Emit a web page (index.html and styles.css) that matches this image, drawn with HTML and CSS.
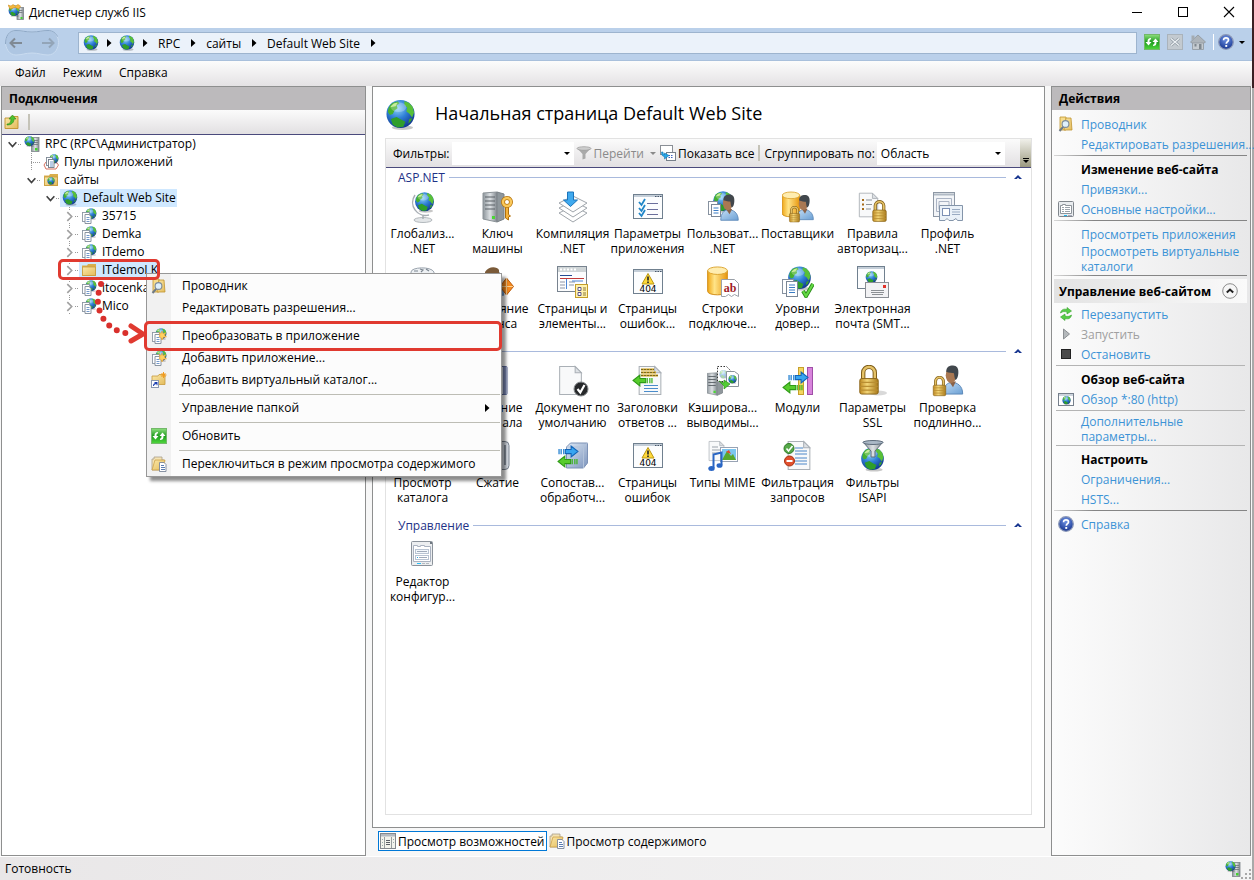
FILE: index.html
```html
<!DOCTYPE html>
<html lang="ru">
<head>
  <meta charset="UTF-8">
  <meta name="viewport" content="width=device-width, initial-scale=1.0">
  <title>Диспетчер служб IIS</title>
  <link rel="stylesheet" href="styles.css">
</head>
<body>
  <!-- Icon sprite -->
  <svg class="sprite" aria-hidden="true">
    <defs>
      <radialGradient id="gSea" cx="0.4" cy="0.3" r="0.7">
        <stop offset="0" stop-color="#8fd4f7"/><stop offset="0.5" stop-color="#2f7fd6"/><stop offset="1" stop-color="#123a92"/>
      </radialGradient>
      <linearGradient id="gFolder" x1="0" y1="0" x2="1" y2="1">
        <stop offset="0" stop-color="#fbe8a8"/><stop offset="1" stop-color="#e3bb5c"/>
      </linearGradient>
      <linearGradient id="gGold" x1="0" y1="0" x2="1" y2="0">
        <stop offset="0" stop-color="#c08a22"/><stop offset="0.4" stop-color="#f3d678"/><stop offset="1" stop-color="#a87818"/>
      </linearGradient>
      <linearGradient id="gDb" x1="0" y1="0" x2="1" y2="0">
        <stop offset="0" stop-color="#f0a818"/><stop offset="0.35" stop-color="#ffe488"/><stop offset="1" stop-color="#e8960c"/>
      </linearGradient>
      <linearGradient id="gSteel" x1="0" y1="0" x2="1" y2="0">
        <stop offset="0" stop-color="#8c949a"/><stop offset="0.5" stop-color="#dde1e4"/><stop offset="1" stop-color="#7f868c"/>
      </linearGradient>
      <linearGradient id="gShirt" x1="0" y1="0" x2="1" y2="1">
        <stop offset="0" stop-color="#c4def5"/><stop offset="1" stop-color="#6a9fd4"/>
      </linearGradient>
      <linearGradient id="gGreen" x1="0" y1="0" x2="0" y2="1">
        <stop offset="0" stop-color="#8fe07f"/><stop offset="0.5" stop-color="#1f9c1f"/><stop offset="1" stop-color="#4fd83c"/>
      </linearGradient>
      <linearGradient id="gBlock" x1="0" y1="0" x2="1" y2="1">
        <stop offset="0" stop-color="#dfe9f5"/><stop offset="1" stop-color="#7d95bd"/>
      </linearGradient>
      <radialGradient id="gHelp" cx="0.5" cy="0.3" r="0.7">
        <stop offset="0" stop-color="#6f94e6"/><stop offset="1" stop-color="#16348f"/>
      </radialGradient>
    </defs>

    <symbol id="globe" viewBox="0 0 32 32">
      <ellipse cx="18" cy="29" rx="11" ry="2.500" fill="#000" opacity="0.22"/>
      <circle cx="16" cy="15" r="14.500" fill="url(#gSea)"/>
      <path d="M3 13C3 8 6 4 9 3l4-1 2 2-3 2 1 3-3 2-2 4-3 1z" fill="#46b02e"/>
      <path d="M20 1.500l5 2 3.500 4 1.500 6-2 5-3-4-3-2 1-4-3-3z" fill="#58c038"/>
      <path d="M6 20l6-2 5 3 4 2-2 5-6 1-5-3z" fill="#2f9e2a"/>
      <path d="M25 20l3-1-1 3-3 3z" fill="#3aa22c"/>
      <path d="M5 8 9 4l4-1-2 4z" fill="#b8e87c"/>
      <ellipse cx="14" cy="8" rx="8" ry="5" fill="#fff" opacity="0.25"/>
    </symbol>

    <symbol id="folder" viewBox="0 0 16 16">
      <path d="M1 3.500h5l1-1.500h8v12H1z" fill="#d9ae4c"/>
      <path d="M1.500 5h13v8.500h-13z" fill="url(#gFolder)" stroke="#c79a3c" stroke-width="0.800"/>
    </symbol>

    <symbol id="folder-up" viewBox="0 0 16 16">
      <path d="M1 4h5l1-1.500h7v12H1z" fill="url(#gFolder)" stroke="#c0922e" stroke-width="0.900"/>
      <path d="M3 10c3 0 4-2 4-5H5l3.500-4L12 5h-2c0 4-3 6-7 6z" fill="#4cc030" stroke="#2b8a1a" stroke-width="0.600"/>
    </symbol>

    <symbol id="folder-globe" viewBox="0 0 16 16">
      <use href="#folder"/>
      <use href="#globe" x="4" y="5" width="8" height="8"/>
    </symbol>

    <symbol id="folder-search" viewBox="0 0 16 16">
      <path d="M2 1h6v13H2z" fill="#f6dc8c" stroke="#c0942e" stroke-width="0.800"/>
      <path d="M8 2h5l1 12H6z" fill="url(#gFolder)" stroke="#c0942e" stroke-width="0.800"/>
      <path d="M5.500 10.500 1.500 15" stroke="#6e7a86" stroke-width="2"/>
      <circle cx="7.500" cy="8" r="3.400" fill="#dff1fc" stroke="#7d8b99" stroke-width="1.100"/>
    </symbol>

    <symbol id="folder-link" viewBox="0 0 16 16">
      <path d="M1 4h6l1-1.500h6v10H1z" fill="url(#gFolder)" stroke="#c79a3c" stroke-width="0.800"/>
      <path d="M12.500 0v6M9.500 3h6M10.500 1l4 4M14.500 1l-4 4" stroke="#f29a1c"/>
      <rect x="0.500" y="8.500" width="7" height="7" fill="#fff" stroke="#8a98b0"/>
      <path d="M2 14c0-2 1-3 2.500-3H3.500V10H6.500v3.200h-1V12C4 12 3 13 3 14z" fill="#1c3fb0"/>
    </symbol>

    <symbol id="folder-docs" viewBox="0 0 16 16">
      <path d="M1 3h2V1h8v3h2v10H1z" fill="#f4e3b4" stroke="#a9a08a" stroke-width="0.800"/>
      <path d="M1 14 4 4h10l-2 10z" fill="url(#gFolder)" stroke="#c79a3c" stroke-width="0.700"/>
      <path d="M8.500 6.500h4.500l2 2v7H8.500z" fill="#fff" stroke="#7a8698" stroke-width="0.900"/>
      <path d="M10 9.500h3M10 11.500h4M10 13.500h4" stroke="#4a6ea8" stroke-width="0.900"/>
    </symbol>

    <symbol id="server-globe" viewBox="0 0 16 16">
      <rect x="7.500" y="1.500" width="7.500" height="14" fill="url(#gSteel)" stroke="#7c8388" stroke-width="0.800"/>
      <path d="M9 4.500h5M9 6.500h5M9 8.500h5" stroke="#6b7278" stroke-width="0.800"/>
      <rect x="11" y="12" width="2.500" height="2.500" fill="#45d031"/>
      <use href="#globe" x="0" y="0" width="11" height="11"/>
    </symbol>

    <symbol id="iis" viewBox="0 0 16 16">
      <rect x="9" y="3.500" width="6.500" height="12" fill="url(#gSteel)" stroke="#7c8388" stroke-width="0.800"/>
      <path d="M10 6.500h4.500M10 8.500h4.500" stroke="#6b7278" stroke-width="0.800"/>
      <rect x="12.500" y="13" width="2" height="2" fill="#45d031"/>
      <use href="#globe" x="0" y="1" width="12" height="12"/>
      <path d="M0 1l3 1 2-1.500L7.500 2 10 0.500 12.500 2 11 5 7 3.500 2 5z" fill="#f5b840" stroke="#c98412" stroke-width="0.500"/>
    </symbol>

    <symbol id="site-app" viewBox="0 0 16 16">
      <use href="#globe" x="4" y="0" width="12" height="12"/>
      <rect x="1.500" y="4.500" width="7" height="9" fill="#fff" stroke="#8d98a4" stroke-width="0.900"/>
      <path d="M4 6.500h4l2 2v7H4z" fill="#fff" stroke="#7e8996" stroke-width="0.900"/>
      <path d="M5.500 9.500h3M5.500 11.500h3M5.500 13.500h3" stroke="#4f7dbd" stroke-width="0.800"/>
    </symbol>

    <symbol id="site-new" viewBox="0 0 16 16">
      <use href="#site-app"/>
      <path d="M11 3l1 2.500 2.800-.8L13.500 7 15.500 9l-3 .2L11 12 9.800 9.200 8 9l1-2L8 4.500l2.200.8z" fill="#ffd060" stroke="#e89a20" stroke-width="0.500"/>
    </symbol>

    <symbol id="pools" viewBox="0 0 16 16">
      <path d="M1 11l2-3h10l2.500 3-2.500 4H3z" fill="#fff" stroke="#d0604c" stroke-width="0.900"/>
      <use href="#globe" x="6" y="0" width="10" height="10"/>
      <rect x="3.500" y="3.500" width="6" height="8" fill="#fff" stroke="#7d8894" stroke-width="0.900"/>
      <rect x="5.500" y="5.500" width="5.500" height="8" fill="#fff" stroke="#6e7986" stroke-width="0.900"/>
      <path d="M7 8h3M7 10h3M7 12h3" stroke="#4f7dbd" stroke-width="0.800"/>
    </symbol>

    <symbol id="refresh" viewBox="0 0 16 16">
      <rect x="0.500" y="0.500" width="15" height="15" fill="url(#gGreen)" stroke="#73b86a"/>
      <path d="M7 4C4.500 4 3.500 5 3.500 8h-2l3 3.500L7.500 8h-2c0-2 .3-2.500 1.500-2.500z" fill="#fff"/>
      <path d="M9 12c2.500 0 3.500-1 3.500-4h2l-3-3.500L8.500 8h2c0 2-.3 2.500-1.500 2.500z" fill="#fff"/>
    </symbol>

    <symbol id="stop-nav" viewBox="0 0 16 16">
      <rect x="0.500" y="0.500" width="15" height="15" fill="#c3cad0" stroke="#aab3bb"/>
      <path d="M4 4.500l8 7M12 4.500l-8 7" stroke="#8f99a2" stroke-width="2.600"/>
      <path d="M4 4.500l8 7M12 4.500l-8 7" stroke="#eef2f5" stroke-width="1.200"/>
    </symbol>

    <symbol id="home" viewBox="0 0 16 16">
      <path d="M2.500 7h11v8.500h-11z" fill="#c5cbd0" stroke="#99a2aa"/>
      <path d="M0.500 8 8 1l7.500 7-1.500 1H2z" fill="#adb4ba" stroke="#8f979e" stroke-width="0.800"/>
      <path d="M1.500 1.500h3v3l-3 2z" fill="#a4abb1"/>
      <rect x="4.500" y="10" width="2" height="2.500" fill="#7f888f"/>
      <rect x="9" y="10" width="2.500" height="5" fill="#7f888f"/>
    </symbol>

    <symbol id="help" viewBox="0 0 16 16">
      <circle cx="8" cy="8" r="7.300" fill="url(#gHelp)" stroke="#8b98b8" stroke-width="1.300"/>
      <path d="M5.600 6.200C5.600 4.500 6.600 3.800 8 3.800s2.500.8 2.500 2.100C10.500 7.600 8.300 7.700 8.300 9.800" fill="none" stroke="#fff" stroke-width="1.700"/>
      <rect x="7.300" y="11" width="1.900" height="1.900" fill="#fff"/>
    </symbol>

    <symbol id="settings" viewBox="0 0 16 16">
      <rect x="0.500" y="0.500" width="15" height="15" rx="1" fill="#e9ecef" stroke="#80868c"/>
      <path d="M2.500 4.500h2v-1h3v1h6v8h-11z" fill="#fff" stroke="#8e949a"/>
      <path d="M4 6.500h2M7 6.500h5M4 8.500h2M7 8.500h5M4 10.500h2M7 10.500h5" stroke="#9ba3ab"/>
      <path d="M6 14.500h3" stroke="#21b6ee"/><path d="M10 14.500h4" stroke="#aab"/>
    </symbol>

    <symbol id="restart" viewBox="0 0 16 16">
      <path d="M2.500 7C3 3.500 6 2.500 9 3.500V1.500L13.500 5 9 8V6C6.500 5.200 4.500 5.500 2.500 7z" fill="#56cf45" stroke="#37a02c" stroke-width="0.600"/>
      <path d="M13.500 9C13 12.500 10 13.500 7 12.500v2L2.500 11 7 8v2c2.500.8 4.500.5 6.500-1z" fill="#56cf45" stroke="#37a02c" stroke-width="0.600"/>
    </symbol>

    <symbol id="play" viewBox="0 0 16 16"><path d="M5.500 3 11.500 8l-6 5z" fill="#b4b8bb" stroke="#8b8f93"/></symbol>
    <symbol id="stop" viewBox="0 0 16 16"><rect x="3.500" y="3.500" width="9" height="9" fill="#4a4a4a" stroke="#222"/></symbol>

    <symbol id="browse" viewBox="0 0 16 16">
      <rect x="0.500" y="2.500" width="15" height="12" fill="#fff" stroke="#77808c"/>
      <rect x="1" y="3" width="14" height="2" fill="#ccd4dc"/>
      <use href="#globe" x="4" y="5" width="9" height="9"/>
    </symbol>

    <symbol id="funnel-gray" viewBox="0 0 16 16">
      <path d="M1.500 3.500 6.500 9v5.500l3-1V9l5-5.500z" fill="#a9a9a9"/>
      <ellipse cx="8" cy="3.500" rx="7" ry="1.800" fill="#cdcdcd" stroke="#999" stroke-width="0.700"/>
    </symbol>

    <symbol id="show-all" viewBox="0 0 16 16">
      <rect x="0.500" y="0.500" width="12" height="9" fill="#fff" stroke="#8a8f96"/>
      <rect x="6.500" y="7.500" width="9" height="8" fill="#fff" stroke="#78808a"/>
      <path d="M8.500 10.500h1.500M11 10.500h1.500M8.500 12.500h1.500M11 12.500h1.500" stroke="#3e62c0"/>
      <path d="M1.500 7c0 3 1 4.500 3 4.500V14L9 10.500 4.500 8v1.500c-1 0-1.500-1-1.500-2.500z" fill="#27a5e6" stroke="#1276b4" stroke-width="0.600"/>
    </symbol>

    <symbol id="features" viewBox="0 0 16 16">
      <rect x="0.500" y="0.500" width="15" height="15" fill="#f3f3ec" stroke="#85898e"/>
      <rect x="1" y="1" width="14" height="2.500" fill="#b5bac0"/>
      <path d="M4.500 4v11M11.500 4v11" stroke="#9a9f9f"/>
      <path d="M6 7.500h4M6 9.500h4M6 11.500h4" stroke="#5b5f66"/>
      <path d="M2 6.500h1M2 9.500h1M2 12.500h1M13 6.500h1M13 9.500h1" stroke="#9aa"/>
    </symbol>

    <symbol id="chev-down" viewBox="0 0 10 10"><path d="M1.500 3 5 6.800 8.500 3" fill="none" stroke="#404040" stroke-width="1.500"/></symbol>
    <symbol id="chev-right" viewBox="0 0 10 10"><path d="M3 1 7 5 3 9" fill="none" stroke="#a0a0a0" stroke-width="1.500"/></symbol>
    <symbol id="chev-up" viewBox="0 0 10 10"><path d="M1 7 5 3l4 4H6.300L5 5.700 3.700 7z" fill="#17358f"/></symbol>
    <symbol id="tri" viewBox="0 0 10 10"><path d="M3 1 7.500 5 3 9z" fill="#000"/></symbol>

    <!-- Feature tile icons, 32x32 -->
    <symbol id="lock" viewBox="0 0 24 32">
      <path d="M6 15V8a6 6 0 0 1 12 0v7" fill="none" stroke="#7c5b18" stroke-width="4.500"/>
      <path d="M6 15V8a6 6 0 0 1 12 0v7" fill="none" stroke="#e5c267" stroke-width="2.500"/>
      <rect x="2.500" y="14" width="19" height="16" rx="2" fill="url(#gGold)" stroke="#8a651a"/>
      <path d="M3 18h18M3 22h18M3 26h18" stroke="#b98e32" stroke-width="1.200"/>
    </symbol>

    <symbol id="person" viewBox="0 0 24 32">
      <path d="M2 30c0-8 4-12 9-12s11 3 11 12z" fill="url(#gShirt)" stroke="#5c88b8"/>
      <path d="M8 17l4 6 3-6z" fill="#8a6248"/>
      <ellipse cx="10" cy="10.500" rx="5.500" ry="8" fill="#a97852"/>
      <path d="M5 7c0-5 3-6.500 7-6.500s6 3 5.500 8-1.500 6-3 7c-1-2-1-4-1.500-7-2 0-5-.5-8-1.500z" fill="#41474c"/>
    </symbol>

    <symbol id="db" viewBox="0 0 24 32">
      <path d="M1.500 5v22c0 5 21 5 21 0V5z" fill="url(#gDb)" stroke="#d08a10"/>
      <ellipse cx="12" cy="5" rx="10.500" ry="4" fill="#ffedb0" stroke="#dba22c"/>
    </symbol>

    <symbol id="tower" viewBox="0 0 24 32">
      <path d="M1 2 15 1v30L1 28z" fill="url(#gSteel)" stroke="#8c9398"/>
      <path d="M15 1l7 2v25l-7 3z" fill="#8f979c" stroke="#7a8186"/>
      <path d="M3 6h10M3 10h10M3 14h10M3 18h10" stroke="#5a6166" stroke-width="1.200"/>
      <rect x="10" y="25" width="3" height="3" fill="#4bd636"/>
    </symbol>

    <symbol id="page" viewBox="0 0 24 30">
      <path d="M1.500 1.500h15l6 6v21h-21z" fill="#f8f9fa" stroke="#aab0b6"/>
      <path d="M16.500 1.500v6h6z" fill="#dde1e5" stroke="#aab0b6"/>
    </symbol>

    <symbol id="arrow-l" viewBox="0 0 20 12">
      <path d="M1 6 7.500 0.800V4H13v4H7.500v3.200z" fill="#57cc2c" stroke="#2f9a18"/>
      <path d="M14.500 3.500v5M17 3.500v5M19 3.500v5" stroke="#3eb322" stroke-width="1.200"/>
    </symbol>

    <symbol id="arrow-r" viewBox="0 0 20 12">
      <path d="M19 6 12.500 0.800V4H7v4h5.500v3.200z" fill="#38a5f0" stroke="#1465b8"/>
      <path d="M1 3.500v5M3 3.500v5M5.500 3.500v5" stroke="#1f7fd0" stroke-width="1.200"/>
    </symbol>

    <symbol id="window" viewBox="0 0 32 28">
      <rect x="1.500" y="1.500" width="29" height="24" fill="#fcfdfe" stroke="#70808f"/>
      <rect x="2" y="2" width="28" height="2" fill="#c4ced8"/>
      <path d="M23 3.500h1.500M25.500 3.500h1.500M28 3.500h1.500" stroke="#47566a"/>
    </symbol>

    <symbol id="t-globalization" viewBox="0 0 32 32">
      <ellipse cx="16" cy="29" rx="9" ry="2.500" fill="#e3e6e8" stroke="#a3a9ae" stroke-width="0.800"/>
      <path d="M16 24v4M8 4a13 13 0 0 0 14 20" fill="none" stroke="#a8aeb4" stroke-width="1.500"/>
      <use href="#globe" x="7" y="1" width="21" height="21"/>
    </symbol>

    <symbol id="t-key" viewBox="0 0 32 32">
      <use href="#tower" x="0" y="0" width="24" height="32"/>
      <path d="M23.500 15v12l3 2v-3l2-1-2-1.500v-8z" fill="#f5b23a" stroke="#b06f0c"/>
      <circle cx="25" cy="11" r="4" fill="none" stroke="#b8760e" stroke-width="4"/>
      <circle cx="25" cy="11" r="4" fill="none" stroke="#fac85a" stroke-width="2.400"/>
    </symbol>

    <symbol id="t-compile" viewBox="0 0 32 32">
      <path d="M2 22l14-7 14 7-14 9z" fill="#fff" stroke="#9fa5ab"/>
      <path d="M2 17l14-7 14 7-14 9z" fill="#fff" stroke="#9fa5ab"/>
      <path d="M2 12l14-7 14 7-14 9z" fill="#fdfdfd" stroke="#9fa5ab"/>
      <path d="M10.500 1h6v8h4L13.500 15.500 6.500 9h4z" fill="#3fa9ee" stroke="#1b74bb"/>
    </symbol>

    <symbol id="t-checklist" viewBox="0 0 32 32">
      <use href="#window" x="0" y="2" width="32" height="28"/>
      <path d="M15 12.500h11M15 18.500h11M15 23.500h11" stroke="#6b6f9c" stroke-width="1.200"/>
      <path d="M7 11l2.500 3L13 8M7 17l2.500 3L13 14M7 22l2.500 3L13 19" fill="none" stroke="#2186c8" stroke-width="1.800"/>
    </symbol>

    <symbol id="t-users" viewBox="0 0 32 32">
      <use href="#globe" x="5" y="0" width="22" height="22"/>
      <rect x="1.500" y="10.500" width="9" height="13" fill="#fff" stroke="#8792a0"/>
      <rect x="4.500" y="13.500" width="9" height="12" fill="#fff" stroke="#7b8796"/>
      <path d="M6.500 17h5M6.500 19.500h5M6.500 22h5" stroke="#3a7cc4"/>
      <use href="#person" x="12" y="3" width="21" height="28"/>
    </symbol>

    <symbol id="t-providers" viewBox="0 0 32 32">
      <use href="#db" x="-1" y="0" width="20" height="27"/>
      <use href="#person" x="13" y="3" width="20" height="28"/>
      <use href="#lock" x="6" y="15" width="13" height="17"/>
    </symbol>

    <symbol id="t-rules" viewBox="0 0 32 32">
      <use href="#page" x="1" y="0" width="21" height="28"/>
      <path d="M5 9h2M5 13.500h2M5 18h2" stroke="#a76c1a" stroke-width="2"/>
      <path d="M9 9h6M9 13.500h6M9 18h5" stroke="#8d939a"/>
      <use href="#lock" x="14" y="9" width="17" height="23"/>
    </symbol>

    <symbol id="t-profile" viewBox="0 0 32 32">
      <rect x="1.500" y="1.500" width="21" height="24" fill="#f3f5f8" stroke="#8e98a5"/>
      <path d="M2 3.500h20" stroke="#b1bac5" stroke-width="2"/>
      <path d="M4.500 7.500h15v13h-15zM7 10.500h10v8H7z" fill="none" stroke="#abb4c4"/>
      <path d="M7.500 14.500h23v15h-5l-1.500-2-3 2h-4l-2-2-2 2h-5.500z" fill="#eaf1f8" stroke="#8495aa"/>
      <rect x="10.500" y="17.500" width="7" height="7" fill="#fff" stroke="#7c90b4"/>
      <path d="M20 18.500h8M20 21h8M20 23.500h8" stroke="#9aabc2"/>
    </symbol>

    <symbol id="t-roles" viewBox="0 0 32 32">
      <path d="M4 6C4 1 24 0 27 6v20H4z" fill="#eef1f4" stroke="#9aa3ad"/>
      <path d="M7 5h4M13 3l3 1-2 2M19 3l3 2" fill="none" stroke="#7b858f" stroke-width="1.200"/>
    </symbol>

    <symbol id="t-session" viewBox="0 0 32 32">
      <use href="#person" x="2" y="3" width="22" height="28"/>
      <path d="M3 6C6 0 15 0 17 4v4H3z" fill="#7a5a38"/>
      <path d="M24.500 12l7 8.500-7 8.500-6.500-8.500z" fill="#f58a1f" stroke="#b85a0c"/>
      <path d="M24.500 12v17M18 20.500h13" stroke="#fccf8f"/>
    </symbol>

    <symbol id="t-pages" viewBox="0 0 32 32">
      <rect x="0.500" y="0.500" width="29" height="25" fill="#fcfdfe" stroke="#78838f"/>
      <rect x="1" y="1" width="28" height="5" fill="#cfd5d7"/>
      <path d="M3 3.500h16" stroke="#fff" stroke-width="2" stroke-dasharray="2 1.500"/>
      <path d="M3 9.500h12" stroke="#264a92"/><path d="M3 12.500h24" stroke="#c23a3a"/>
      <path d="M3 16h5M3 19h5M3 22h5M12 16h6M12 19h5" stroke="#8e95a6"/>
      <path d="M9.500 13v10M15 15h11" stroke="#4a84d6"/>
      <rect x="18.500" y="18.500" width="12" height="13" fill="#fff2ae" stroke="#c49d28"/>
      <path d="M21 21.500h3v3h-3zM21 26.500h3v3h-3z" fill="#fff" stroke="#5c5488"/>
      <path d="M26 22h3M26 24h3M26 27h3M26 29h3" stroke="#8e7a3a"/>
    </symbol>

    <symbol id="t-404" viewBox="0 0 32 32">
      <use href="#window" x="0" y="2" width="32" height="28"/>
      <path d="M16 7.500l6 10.500H10z" fill="#ffd93a" stroke="#b99612" stroke-linejoin="round"/>
      <path d="M16 10.500v4M16 15.500v1.500" stroke="#2a2a2a" stroke-width="1.700"/>
    </symbol>

    <symbol id="t-strings" viewBox="0 0 32 32">
      <use href="#db" x="-1" y="0" width="23" height="30"/>
      <path d="M14.500 13.500h13l4 4v13l-4-2-3 2-3-2-3 2h-4z" fill="#fff" stroke="#9aa0a8"/>
    </symbol>

    <symbol id="t-trust" viewBox="0 0 32 32">
      <use href="#globe" x="5" y="0" width="25" height="25"/>
      <rect x="0.500" y="13.500" width="11" height="14" fill="#fff" stroke="#8792a0"/>
      <rect x="4.500" y="15.500" width="11" height="15" fill="#fff" stroke="#7b8796"/>
      <path d="M7 19h6M7 21.500h6M7 24h6M7 26.500h6" stroke="#3a7cc4"/>
      <path d="M21 25l3 5 7-12" fill="none" stroke="#2c8a1a" stroke-width="4"/>
      <path d="M21 25l3 5 7-12" fill="none" stroke="#63d943" stroke-width="2.200"/>
    </symbol>

    <symbol id="t-mail" viewBox="0 0 32 32">
      <rect x="0.500" y="0.500" width="27" height="22" fill="#fcfdfe" stroke="#70808f"/>
      <rect x="1" y="1" width="26" height="2" fill="#c4ced8"/>
      <use href="#globe" x="8" y="5" width="13" height="13"/>
      <rect x="8.500" y="16.500" width="23" height="15" fill="#f2f2f4" stroke="#8a8e94"/>
      <rect x="26" y="19" width="3" height="3" fill="#e0322a"/>
      <path d="M14 24.500h13M14 26.500h13M15 28.500h11" stroke="#8c9094"/>
    </symbol>

    <symbol id="t-log" viewBox="0 0 32 32">
      <rect x="5" y="1.500" width="20" height="28" rx="1" fill="#e6ebf6" stroke="#5d6a9c"/>
      <path d="M22.500 2v27" stroke="#7c88b4" stroke-width="3"/>
    </symbol>

    <symbol id="t-default-doc" viewBox="0 0 32 32">
      <use href="#page" x="1" y="0" width="25" height="31"/>
      <circle cx="24" cy="24" r="7" fill="#26282a" stroke="#85898c"/>
      <path d="M20.500 24l2.800 3.500 4.200-7.500" fill="none" stroke="#fff" stroke-width="2.200"/>
    </symbol>

    <symbol id="t-headers" viewBox="0 0 32 32">
      <use href="#page" x="5" y="0" width="26" height="31"/>
      <path d="M9 4.500h13M9 7.500h15M9 10.500h17" stroke="#cfa21c" stroke-width="2"/>
      <path d="M9 4.500h13M9 7.500h15M9 10.500h17" stroke="#665a22" stroke-width="0.800" stroke-dasharray="2 1"/>
      <path d="M12 20.500h14M12 23.500h14M12 26.500h14" stroke="#4a8ccb"/>
      <use href="#arrow-l" x="0" y="9" width="21" height="13"/>
    </symbol>

    <symbol id="t-cache" viewBox="0 0 32 32">
      <use href="#tower" x="-1" y="7" width="18" height="24"/>
      <path d="M10.500 1.500h9l4 4v11h-13z" fill="#fff" stroke="#333" stroke-dasharray="1.500 1.500"/>
      <use href="#globe" x="12" y="5" width="9" height="9" opacity="0.4"/>
      <path d="M19.500 6.500h8l4 3v12h-12z" fill="#fff" stroke="#8a929a"/>
      <use href="#globe" x="21" y="10" width="9" height="9"/>
      <path d="M12 16l5 2v-3l6 4-6 5v-3z" fill="#52cc35" stroke="#2c921a" stroke-width="0.700"/>
    </symbol>

    <symbol id="t-modules" viewBox="0 0 32 32">
      <rect x="16.500" y="2.500" width="5" height="27" fill="#f4d660" stroke="#c6a02c"/>
      <rect x="25.500" y="2.500" width="5" height="27" fill="#d884dc" stroke="#a04fa8"/>
      <use href="#arrow-r" x="6" y="6" width="21" height="13"/>
      <use href="#arrow-l" x="0" y="16" width="21" height="13"/>
    </symbol>

    <symbol id="t-ssl" viewBox="0 0 32 32">
      <ellipse cx="21" cy="28" rx="9" ry="2.500" fill="#000" opacity="0.150"/>
      <use href="#lock" x="0" y="0" width="24" height="31"/>
    </symbol>

    <symbol id="t-auth" viewBox="0 0 32 32">
      <use href="#person" x="9" y="0" width="24" height="31"/>
      <use href="#lock" x="-1" y="11" width="17" height="21"/>
    </symbol>

    <symbol id="t-dir" viewBox="0 0 32 32"><use href="#page" x="4" y="1" width="24" height="30"/></symbol>

    <symbol id="t-compress" viewBox="0 0 32 32">
      <rect x="5" y="1.500" width="22" height="28" rx="4" fill="#d9dfe8" stroke="#78828f"/>
      <path d="M23 5v20" stroke="#88929f" stroke-width="2"/>
    </symbol>

    <symbol id="t-handlers" viewBox="0 0 32 32">
      <path d="M9.500 7l4-4h17v20l-4 5h-17z" fill="url(#gBlock)" stroke="#7d92b6"/>
      <path d="M9.500 7h17v21M26.500 7l4-4" fill="none" stroke="#b3c3da"/>
      <use href="#arrow-r" x="1" y="5" width="21" height="13"/>
      <use href="#arrow-l" x="0" y="15" width="21" height="13"/>
    </symbol>

    <symbol id="t-mime" viewBox="0 0 32 32">
      <use href="#page" x="1" y="0" width="17" height="22"/>
      <path d="M5 7h6M5 10h9M5 13h9" stroke="#9aa2ab"/>
      <rect x="13.500" y="7.500" width="17" height="14" fill="#fff" stroke="#98a3b4"/>
      <path d="M15 9h14v11H15z" fill="#7cc6f0"/><path d="M15 20l5-9 4 5 2-2 3 6z" fill="#58a82c"/><path d="M19 12l3-2 2 4z" fill="#e04c28"/>
      <path d="M6.500 28V14.500l8-2V25" fill="none" stroke="#2a66c4" stroke-width="2"/>
      <ellipse cx="4.500" cy="28.500" rx="3.200" ry="2.500" fill="#2a66c4"/><ellipse cx="12.500" cy="25.500" rx="3" ry="2.300" fill="#2a66c4"/>
    </symbol>

    <symbol id="t-filtering" viewBox="0 0 32 32">
      <use href="#page" x="4" y="0" width="26" height="31"/>
      <path d="M13 8h8M13 11h12M13 14h12M13 18h12M13 21h12M13 24h12" stroke="#4a86c8"/>
      <circle cx="7" cy="8.500" r="5" fill="#55a848" stroke="#2f7a28"/>
      <path d="M4.500 8.500l2 2.500 4-5" fill="none" stroke="#fff" stroke-width="1.600"/>
      <circle cx="7.500" cy="21" r="5" fill="#e2502e" stroke="#a8300f"/>
      <path d="M4.500 21h6" stroke="#fff" stroke-width="2"/>
    </symbol>

    <symbol id="t-isapi" viewBox="0 0 32 32">
      <use href="#globe" x="3" y="7" width="25" height="25"/>
      <path d="M6 2l8 9v6h4v-6l8-9z" fill="url(#gSteel)" stroke="#5f6d7c"/>
      <ellipse cx="16" cy="2.500" rx="10" ry="2" fill="#aab8c6" stroke="#5f6d7c"/>
    </symbol>

    <symbol id="t-editor" viewBox="0 0 32 32">
      <rect x="4.500" y="2.500" width="21" height="24" rx="1" fill="#eceef0" stroke="#8b929a"/>
      <path d="M23 4h2" stroke="#46505c" stroke-width="1.500"/>
      <path d="M6.500 6.500h4v1h3v-1h4v1h6v15h-17z" fill="#fff" stroke="#aab2c0"/>
      <rect x="8.500" y="10.500" width="13" height="4" fill="#f4f8fc" stroke="#b8c3d2"/>
      <path d="M10 12.500h10" stroke="#a0aaba"/>
      <rect x="8.500" y="16.500" width="13" height="4" fill="#fff" stroke="#b8c3d2"/>
      <path d="M12 18.500h8" stroke="#a0aaba"/><path d="M10 18.500h1" stroke="#26a4e0"/>
      <path d="M10 24.500h4" stroke="#29bdf5"/><path d="M15 24.500h8" stroke="#b4bac0" stroke-dasharray="3 1"/>
    </symbol>
  </svg>

  <div class="window">
    <header class="titlebar">
      <svg class="icon"><use href="#iis"/></svg>
      <span class="titlebar-text">Диспетчер служб IIS</span>
      <button class="win-btn" aria-label="Свернуть"><svg viewBox="0 0 12 12"><path d="M1 6.500h10" stroke="#000"/></svg></button>
      <button class="win-btn" aria-label="Развернуть"><svg viewBox="0 0 12 12"><rect x="1.500" y="1.500" width="9" height="9" fill="none" stroke="#000"/></svg></button>
      <button class="win-btn" aria-label="Закрыть"><svg viewBox="0 0 12 12"><path d="M1 1l10 10M11 1 1 11" stroke="#000" stroke-width="1.100"/></svg></button>
    </header>

    <div class="addressbar">
      <svg class="nav-lens" viewBox="0 0 56 28">
        <path d="M12 1.500C18 1.500 21 3 28 3s10-1.500 16-1.500C51 1.500 54.500 8 54.500 13.500S51 26 44 26c-6 0-9-2-16-2s-10 2-16 2C5 26 1.500 19 1.500 13.500S5 1.500 12 1.500z" fill="#aec6e2" stroke="#cadcf0"/>
        <path d="M1.500 15C1.500 7 5 1.500 12 1.500 18 1.500 21 3 28 3s10-1.500 16-1.500c5 0 8 3 9.500 6" fill="none" stroke="#8ea8c6"/>
        <path d="M6 14h12M11 9.500 6.500 14l4.500 4.500" fill="none" stroke="#808a94" stroke-width="2"/>
        <path d="M38 14h12M45 9.500l4.500 4.500-4.500 4.500" fill="none" stroke="#93a5b8" stroke-width="2"/>
      </svg>
      <nav class="breadcrumbs" aria-label="Адрес">
        <svg class="icon"><use href="#globe"/></svg>
        <svg class="sep"><use href="#tri"/></svg>
        <svg class="icon"><use href="#globe"/></svg>
        <svg class="sep"><use href="#tri"/></svg>
        <a href="#">RPC</a>
        <svg class="sep"><use href="#tri"/></svg>
        <a href="#">сайты</a>
        <svg class="sep"><use href="#tri"/></svg>
        <a href="#">Default Web Site</a>
        <svg class="sep"><use href="#tri"/></svg>
      </nav>
      <div class="address-tools">
        <button aria-label="Обновить"><svg class="icon"><use href="#refresh"/></svg></button>
        <button aria-label="Остановить" disabled><svg class="icon"><use href="#stop-nav"/></svg></button>
        <button aria-label="Домой" disabled><svg class="icon"><use href="#home"/></svg></button>
        <button class="help-btn" aria-label="Справка"><svg class="icon"><use href="#help"/></svg><span class="caret"></span></button>
      </div>
    </div>

    <nav class="menubar" aria-label="Меню">
      <button>Файл</button>
      <button>Режим</button>
      <button>Справка</button>
    </nav>

    <main class="workspace">
      <section class="panel connections">
        <h2 class="panel-title">Подключения</h2>
        <div class="panel-toolbar">
          <button aria-label="Подключиться"><svg class="icon"><use href="#folder-up"/></svg></button>
          <span class="divider"></span>
        </div>
        <ul class="tree">
          <li>
            <div class="row"><span class="twist"><svg><use href="#chev-down"/></svg></span><span class="node"><svg class="icon"><use href="#server-globe"/></svg>RPC (RPC\Администратор)</span></div>
            <ul>
              <li><div class="row"><span class="twist leaf"></span><span class="node"><svg class="icon"><use href="#pools"/></svg>Пулы приложений</span></div></li>
              <li>
                <div class="row"><span class="twist"><svg><use href="#chev-down"/></svg></span><span class="node"><svg class="icon"><use href="#folder-globe"/></svg>сайты</span></div>
                <ul>
                  <li>
                    <div class="row"><span class="twist"><svg><use href="#chev-down"/></svg></span><span class="node selected"><svg class="icon"><use href="#globe"/></svg>Default Web Site</span></div>
                    <ul>
                      <li><div class="row"><span class="twist line"><svg><use href="#chev-right"/></svg></span><span class="node"><svg class="icon"><use href="#site-app"/></svg>35715</span></div></li>
                      <li><div class="row"><span class="twist line"><svg><use href="#chev-right"/></svg></span><span class="node"><svg class="icon"><use href="#site-app"/></svg>Demka</span></div></li>
                      <li><div class="row"><span class="twist line"><svg><use href="#chev-right"/></svg></span><span class="node"><svg class="icon"><use href="#site-app"/></svg>ITdemo</span></div></li>
                      <li><div class="row"><span class="twist line"><svg><use href="#chev-right"/></svg></span><span class="node selected"><svg class="icon"><use href="#folder"/></svg>ITdemoLK</span></div></li>
                      <li><div class="row"><span class="twist line"><svg><use href="#chev-right"/></svg></span><span class="node"><svg class="icon"><use href="#site-app"/></svg>itocenka</span></div></li>
                      <li><div class="row"><span class="twist line"><svg><use href="#chev-right"/></svg></span><span class="node"><svg class="icon"><use href="#site-app"/></svg>Mico</span></div></li>
                    </ul>
                  </li>
                </ul>
              </li>
            </ul>
          </li>
        </ul>
      </section>

      <div class="center">
        <section class="panel features">
          <div class="page-head">
            <svg><use href="#globe"/></svg>
            <h1>Начальная страница Default Web Site</h1>
          </div>
          <div class="feature-box">
            <div class="filterbar">
              <label for="filter">Фильтры:</label>
              <span class="combo combo-filter"><select id="filter"><option></option></select></span>
              <button class="muted" disabled><svg class="icon"><use href="#funnel-gray"/></svg>Перейти<span class="caret"></span></button>
              <button><svg class="icon"><use href="#show-all"/></svg>Показать все</button>
              <span class="divider"></span>
              <label for="group">Сгруппировать по:</label>
              <span class="combo combo-group"><select id="group"><option>Область</option></select></span>
              <span class="overflow"><span class="caret"></span></span>
            </div>

            <div class="group">
              <h3><span>ASP.NET</span><svg><use href="#chev-up"/></svg></h3>
              <div class="tiles">
                <button class="tile"><svg><use href="#t-globalization"/></svg><span>Глобализ...<br>.NET</span></button>
                <button class="tile"><svg><use href="#t-key"/></svg><span>Ключ<br>машины</span></button>
                <button class="tile"><svg><use href="#t-compile"/></svg><span>Компиляция<br>.NET</span></button>
                <button class="tile"><svg><use href="#t-checklist"/></svg><span>Параметры<br>приложения</span></button>
                <button class="tile"><svg><use href="#t-users"/></svg><span>Пользоват...<br>.NET</span></button>
                <button class="tile"><svg><use href="#t-providers"/></svg><span>Поставщики</span></button>
                <button class="tile"><svg><use href="#t-rules"/></svg><span>Правила<br>авторизац...</span></button>
                <button class="tile"><svg><use href="#t-profile"/></svg><span>Профиль<br>.NET</span></button>
                <button class="tile"><svg><use href="#t-roles"/></svg><span>Роли<br>.NET</span></button>
                <button class="tile"><svg><use href="#t-session"/></svg><span>Состояние<br>сеанса</span></button>
                <button class="tile"><svg><use href="#t-pages"/></svg><span>Страницы и<br>элементы...</span></button>
                <button class="tile"><svg viewBox="0 0 32 32"><use href="#t-404"/><text x="16" y="26" text-anchor="middle" class="glyph-404">404</text></svg><span>Страницы<br>ошибок...</span></button>
                <button class="tile"><svg viewBox="0 0 32 32"><use href="#t-strings"/><text x="23" y="26" text-anchor="middle" class="glyph-ab">ab</text></svg><span>Строки<br>подключе...</span></button>
                <button class="tile"><svg><use href="#t-trust"/></svg><span>Уровни<br>довер...</span></button>
                <button class="tile"><svg><use href="#t-mail"/></svg><span>Электронная<br>почта (SMT...</span></button>
              </div>
            </div>

            <div class="group">
              <h3><span>IIS</span><svg><use href="#chev-up"/></svg></h3>
              <div class="tiles">
                <button class="tile"><svg><use href="#t-dir"/></svg><span>CGI</span></button>
                <button class="tile"><svg><use href="#t-log"/></svg><span>Ведение<br>журнала</span></button>
                <button class="tile"><svg><use href="#t-default-doc"/></svg><span>Документ по<br>умолчанию</span></button>
                <button class="tile"><svg><use href="#t-headers"/></svg><span>Заголовки<br>ответов ...</span></button>
                <button class="tile"><svg><use href="#t-cache"/></svg><span>Кэширова...<br>выводимы...</span></button>
                <button class="tile"><svg><use href="#t-modules"/></svg><span>Модули</span></button>
                <button class="tile"><svg><use href="#t-ssl"/></svg><span>Параметры<br>SSL</span></button>
                <button class="tile"><svg><use href="#t-auth"/></svg><span>Проверка<br>подлинно...</span></button>
                <button class="tile"><svg><use href="#t-dir"/></svg><span>Просмотр<br>каталога</span></button>
                <button class="tile"><svg><use href="#t-compress"/></svg><span>Сжатие</span></button>
                <button class="tile"><svg><use href="#t-handlers"/></svg><span>Сопостав...<br>обработч...</span></button>
                <button class="tile"><svg viewBox="0 0 32 32"><use href="#t-404"/><text x="16" y="26" text-anchor="middle" class="glyph-404">404</text></svg><span>Страницы<br>ошибок</span></button>
                <button class="tile"><svg><use href="#t-mime"/></svg><span>Типы MIME</span></button>
                <button class="tile"><svg><use href="#t-filtering"/></svg><span>Фильтрация<br>запросов</span></button>
                <button class="tile"><svg><use href="#t-isapi"/></svg><span>Фильтры<br>ISAPI</span></button>
              </div>
            </div>

            <div class="group">
              <h3><span>Управление</span><svg><use href="#chev-up"/></svg></h3>
              <div class="tiles">
                <button class="tile"><svg><use href="#t-editor"/></svg><span>Редактор<br>конфигур...</span></button>
              </div>
            </div>
          </div>
        </section>
        <div class="view-tabs">
          <button class="active"><svg class="icon"><use href="#features"/></svg>Просмотр возможностей</button>
          <button><svg class="icon"><use href="#folder-docs"/></svg>Просмотр содержимого</button>
        </div>
      </div>

      <aside class="panel actions">
        <h2 class="panel-title">Действия</h2>
        <div class="action-list">
          <a href="#"><svg class="icon"><use href="#folder-search"/></svg><span>Проводник</span></a>
          <a href="#" class="nowrap"><span>Редактировать разрешения...</span></a>
          <hr>
          <h4>Изменение веб-сайта</h4>
          <a href="#"><span>Привязки...</span></a>
          <a href="#"><svg class="icon"><use href="#settings"/></svg><span>Основные настройки...</span></a>
          <hr>
          <a href="#"><span>Просмотреть приложения</span></a>
          <a href="#"><span>Просмотреть виртуальные каталоги</span></a>
          <hr>
          <h3 class="action-group">Управление веб-сайтом
            <button aria-label="Свернуть группу"><svg viewBox="0 0 16 16"><circle cx="8" cy="8" r="7.300" fill="#f6f6f6" stroke="#8c8c8c"/><path d="M4.800 9.500 8 6.500l3.200 3" fill="none" stroke="#222" stroke-width="2"/></svg></button>
          </h3>
          <a href="#"><svg class="icon"><use href="#restart"/></svg><span>Перезапустить</span></a>
          <a class="off"><svg class="icon"><use href="#play"/></svg><span>Запустить</span></a>
          <a href="#"><svg class="icon"><use href="#stop"/></svg><span>Остановить</span></a>
          <hr class="light">
          <h4>Обзор веб-сайта</h4>
          <a href="#"><svg class="icon"><use href="#browse"/></svg><span>Обзор *:80 (http)</span></a>
          <hr class="light">
          <a href="#"><span>Дополнительные<br>параметры...</span></a>
          <hr class="light">
          <h4>Настроить</h4>
          <a href="#"><span>Ограничения...</span></a>
          <a href="#"><span>HSTS...</span></a>
          <hr>
          <a href="#"><svg class="icon"><use href="#help"/></svg><span>Справка</span></a>
        </div>
      </aside>
    </main>

    <footer class="statusbar">
      <span>Готовность</span>
      <svg class="icon"><use href="#server-globe"/></svg>
      <svg class="grip" viewBox="0 0 10 10"><path d="M8 1h2M8 5h2M8 9h2M4 5h2M4 9h2M0 9h2" stroke="#a8a8a8" stroke-width="2"/></svg>
    </footer>

    <!-- Context menu over the tree -->
    <ul class="context-menu">
      <li><button><svg class="icon"><use href="#folder-search"/></svg>Проводник</button></li>
      <li><button>Редактировать разрешения...</button></li>
      <li class="line"></li>
      <li><button><svg class="icon"><use href="#site-new"/></svg>Преобразовать в приложение</button></li>
      <li><button><svg class="icon"><use href="#site-new"/></svg>Добавить приложение...</button></li>
      <li><button><svg class="icon"><use href="#folder-link"/></svg>Добавить виртуальный каталог...</button></li>
      <li class="line"></li>
      <li><button>Управление папкой<svg class="sub"><use href="#tri"/></svg></button></li>
      <li class="line"></li>
      <li><button><svg class="icon"><use href="#refresh"/></svg>Обновить</button></li>
      <li class="line"></li>
      <li><button><svg class="icon"><use href="#folder-docs"/></svg>Переключиться в режим просмотра содержимого</button></li>
    </ul>

    <!-- Red callouts -->
    <div class="mark mark-node"></div>
    <div class="mark mark-item"></div>
    <svg class="mark-arrow" viewBox="0 0 60 70">
      <path d="M11 6C7 18 6 28 13 40c6 10 16 15 30 16" fill="none" stroke="#d9302c" stroke-width="6" stroke-linecap="round" stroke-dasharray="0 9"/>
      <path d="M41 48l12 8-12 7" fill="none" stroke="#e03a30" stroke-width="5" stroke-linecap="round" stroke-linejoin="round"/>
    </svg>
  </div>
</body>
</html>
```

FILE: styles.css
```css
* {
  box-sizing: border-box;
}

body {
  margin: 0;
  font-family: "Open Sans", "Noto Sans", sans-serif;
  font-size: 12px;
  line-height: 15px;
  color: #000;
  background: linear-gradient(#3a2024 88px, #a9a9a9 88px);
}

button,
select {
  font: inherit;
  color: inherit;
  background: none;
  border: none;
  border-radius: 0;
  padding: 0;
  margin: 0;
}

h1, h2, h3, h4, ul {
  margin: 0;
  padding: 0;
  font-size: 12px;
}

ul {
  list-style: none;
}

a {
  color: inherit;
  text-decoration: none;
}

svg {
  display: block;
  flex: none;
}

.sprite {
  position: absolute;
  width: 0;
  height: 0;
}

.icon {
  width: 16px;
  height: 16px;
}

.glyph-404 {
  font: 9px "DejaVu Sans", sans-serif;
}

.glyph-ab {
  font: bold 12px "Liberation Serif", serif;
  fill: #a01c28;
}

.window {
  position: relative;
  display: flex;
  flex-direction: column;
  min-height: 100vh;
  margin-right: 2px;
  background: #f7f7f7;
}

/* Title bar */
.titlebar {
  display: flex;
  align-items: center;
  height: 28px;
  padding: 0 0 4px 8px;
  background: #fff;
}

.titlebar-text {
  flex: 1;
  margin-left: 5px;
}

.win-btn {
  display: flex;
  justify-content: center;
  width: 46px;
}

.win-btn svg {
  width: 12px;
  height: 12px;
}

/* Address bar */
.addressbar {
  display: flex;
  align-items: center;
  height: 33px;
  padding: 0 7px 2px 4px;
  background: #bad0ea;
  border-bottom: 1px solid #a9c0dc;
}

.nav-lens {
  width: 56px;
  height: 28px;
  margin-right: 18px;
}

.breadcrumbs {
  flex: 1;
  display: flex;
  align-items: center;
  gap: 5px;
  height: 22px;
  padding-left: 4px;
  background: #ebf2fa;
  border: 1px solid #9db4ce;
}

.sep {
  width: 10px;
  height: 10px;
}

.breadcrumbs a {
  padding: 0 3px;
}

.address-tools {
  display: flex;
  align-items: center;
  gap: 7px;
  margin-left: 7px;
  padding-bottom: 2px;
}

.help-btn {
  display: flex;
  align-items: center;
  gap: 5px;
  padding-left: 4px;
  border-left: 1px solid #fff;
}

.caret {
  width: 0;
  border: 3px solid transparent;
  border-top-color: currentColor;
  border-bottom: none;
}

/* Menu bar */
.menubar {
  display: flex;
  gap: 17px;
  height: 25px;
  padding: 0 15px 2px;
  background: linear-gradient(#fcfcfc, #e4e2e4);
}

/* Panels */
.workspace {
  flex: 1;
  display: flex;
  gap: 6px;
  padding: 0 1px;
}

.panel {
  background: #fff;
  border: 1px solid #8e8f8f;
}

.panel-title {
  height: 23px;
  padding: 4px 7px 0;
  background: #bcbabc;
}

.panel-toolbar {
  display: flex;
  align-items: center;
  gap: 8px;
  height: 25px;
  padding-left: 2px;
  background: linear-gradient(#fbfbfb, #e2e0e2);
  border-bottom: 1px solid #4a4a7c;
}

.divider {
  width: 2px;
  height: 16px;
  background: #c5c3b8;
}

.connections {
  flex: none;
  width: 365px;
}

/* Tree */
.tree {
  padding-left: 2px;
}

.tree ul {
  padding-left: 19px;
}

.row {
  display: flex;
  align-items: center;
  height: 18px;
  white-space: nowrap;
}

.twist {
  display: flex;
  align-items: center;
  justify-content: center;
  width: 18px;
  height: 18px;
  padding-right: 2px;
  background: repeating-linear-gradient(90deg, #999 0 1px, transparent 1px 2px) 14px 9px / 4px 1px no-repeat;
}

.twist svg {
  width: 11px;
  height: 11px;
}

.twist.line {
  background:
    repeating-linear-gradient(90deg, #999 0 1px, transparent 1px 2px) 14px 9px / 4px 1px no-repeat,
    repeating-linear-gradient(#999 0 1px, transparent 1px 2px) 8px 0 / 1px 18px no-repeat;
}

.twist.line svg {
  background: #fff;
}

.twist.leaf {
  background:
    repeating-linear-gradient(90deg, #999 0 1px, transparent 1px 2px) 8px 9px / 10px 1px no-repeat,
    repeating-linear-gradient(#999 0 1px, transparent 1px 2px) 8px 0 / 1px 18px no-repeat;
}

.node {
  display: flex;
  align-items: center;
  gap: 5px;
  height: 18px;
  padding: 0 1px 1px 2px;
}

.selected {
  background: #cfe8ff;
}

/* Features view */
.center {
  flex: 1;
  display: flex;
  flex-direction: column;
  min-width: 0;
}

.features {
  flex: 1;
  display: flex;
  flex-direction: column;
  padding: 0 12px 12px;
}

.page-head {
  display: flex;
  align-items: center;
  gap: 19px;
  height: 51px;
}

.page-head svg {
  width: 31px;
  height: 32px;
  margin-top: 4px;
}

.page-head h1 {
  font-size: 18px;
  font-weight: normal;
  line-height: 24px;
}

.feature-box {
  flex: 1;
  border: 1px solid #e2e2e2;
}

.filterbar {
  display: flex;
  align-items: center;
  height: 29px;
  padding-left: 7px;
  white-space: nowrap;
  background: linear-gradient(#fbfbfb, #e2e0e2);
  border-bottom: 1px solid #4a4a7c;
}

.filterbar button {
  display: flex;
  align-items: center;
  gap: 2px;
  margin-right: 4px;
}

.filterbar button .caret {
  margin-left: 4px;
}

.filterbar label {
  margin-right: 2px;
}

.filterbar .divider {
  margin: 0 4px 0 0;
}

.muted {
  color: #8a8a8a;
}

.combo {
  position: relative;
  margin-right: 2px;
}

.combo select {
  appearance: none;
  display: block;
  width: 100%;
  height: 23px;
  padding: 0 4px;
  background: #fff;
}

.combo::after {
  content: "";
  position: absolute;
  right: 4px;
  top: 10px;
  border: 3px solid transparent;
  border-top-color: #000;
  border-bottom: none;
}

.combo-filter {
  width: 122px;
}

.combo-group {
  width: 128px;
}

.overflow {
  display: flex;
  flex-direction: column;
  align-items: center;
  justify-content: flex-end;
  gap: 1px;
  width: 11px;
  height: 28px;
  margin-left: auto;
  padding-bottom: 4px;
  background: linear-gradient(#f0f0ea, #9c9a80);
}

.overflow::before {
  content: "";
  width: 6px;
  height: 1px;
  background: #000;
}

.overflow .caret {
  flex: none;
}

.group {
  margin-bottom: 6px;
}

.group h3 {
  display: flex;
  align-items: center;
  height: 18px;
  padding: 0 8px 0 12px;
  font-weight: normal;
  color: #1e3287;
}

.group h3 span {
  flex: 1;
  display: flex;
  align-items: center;
  gap: 4px;
}

.group h3 span::after {
  content: "";
  flex: 1;
  height: 1px;
  background: #a9badd;
}

.group h3 svg {
  width: 10px;
  height: 10px;
  margin-left: 7px;
}

.tiles {
  display: flex;
  flex-wrap: wrap;
}

.tile {
  display: flex;
  flex-direction: column;
  align-items: center;
  gap: 3px;
  width: 75px;
  height: 75px;
  padding: 5px 2px 5px 0;
  text-align: center;
  white-space: nowrap;
}

.tile svg {
  width: 32px;
  height: 32px;
}

.view-tabs {
  display: flex;
  align-items: flex-start;
  height: 28px;
  padding: 3px 6px 0;
}

.view-tabs button {
  display: flex;
  align-items: center;
  gap: 2px;
  height: 20px;
  padding: 0 1px;
  border: 1px solid transparent;
}

.view-tabs .active {
  background: #fff;
  border-color: #0078d7;
}

/* Actions */
.actions {
  flex: none;
  width: 200px;
  background: linear-gradient(90deg, #fcfcfc, #e8e8e9);
}

.action-list {
  padding: 4px 3px 0 2px;
}

.action-list a,
.action-list h4 {
  display: flex;
  align-items: center;
  min-height: 20px;
  padding-left: 27px;
}

.action-list a {
  color: #3c93d6;
}

.action-list .nowrap {
  white-space: nowrap;
}

.action-list a .icon {
  margin: 0 7px 0 -23px;
}

.action-list a.off {
  color: #a0a0a0;
}

.action-list hr {
  height: 1px;
  margin: 1px 0 3px;
  border: none;
  background: linear-gradient(90deg, #d8d8d8, #858585 40px);
}

.action-list hr.light {
  margin: 1px 2px 3px;
  background: #b4b4b4;
}

.action-group {
  display: flex;
  align-items: center;
  justify-content: space-between;
  height: 24px;
  margin-bottom: 1px;
  padding: 0 9px 0 5px;
  background: linear-gradient(90deg, #e3e3e3, #fafafa);
}

.action-group svg {
  width: 16px;
  height: 16px;
}

/* Status bar */
.statusbar {
  display: flex;
  align-items: center;
  height: 24px;
  padding: 0 1px 0 5px;
  background: linear-gradient(90deg, #e9e7e8, #f4f4f4);
  border-top: 1px solid #fff;
}

.statusbar span {
  flex: 1;
}

.grip {
  width: 10px;
  height: 10px;
  margin-top: 10px;
}

/* Context menu */
.context-menu {
  position: absolute;
  left: 146px;
  top: 273px;
  width: 356px;
  padding: 1px;
  background: linear-gradient(90deg, #f1f1f1 24px, #fcfcfc 24px);
  border: 1px solid #979797;
  box-shadow: 4px 4px 3px rgba(0, 0, 0, 0.45);
}

.context-menu button {
  display: flex;
  align-items: center;
  width: 100%;
  height: 22px;
  padding: 0 0 1px 34px;
  white-space: nowrap;
}

.context-menu .icon {
  margin: 0 15px 0 -31px;
}

.context-menu .sub {
  width: 10px;
  height: 10px;
  margin: 0 8px 0 auto;
}

.context-menu .line {
  height: 6px;
  margin-left: 31px;
  background: linear-gradient(#bdbdb5, #bdbdb5) 0 3px / 100% 1px no-repeat;
}

/* Callouts */
.mark {
  position: absolute;
  border: 3px solid #e03a30;
  border-radius: 5px;
}

.mark-node {
  left: 58px;
  top: 259px;
  width: 102px;
  height: 21px;
}

.mark-item {
  left: 144px;
  top: 321px;
  width: 358px;
  height: 30px;
}

.mark-arrow {
  position: absolute;
  left: 90px;
  top: 278px;
  width: 60px;
  height: 70px;
}
```
